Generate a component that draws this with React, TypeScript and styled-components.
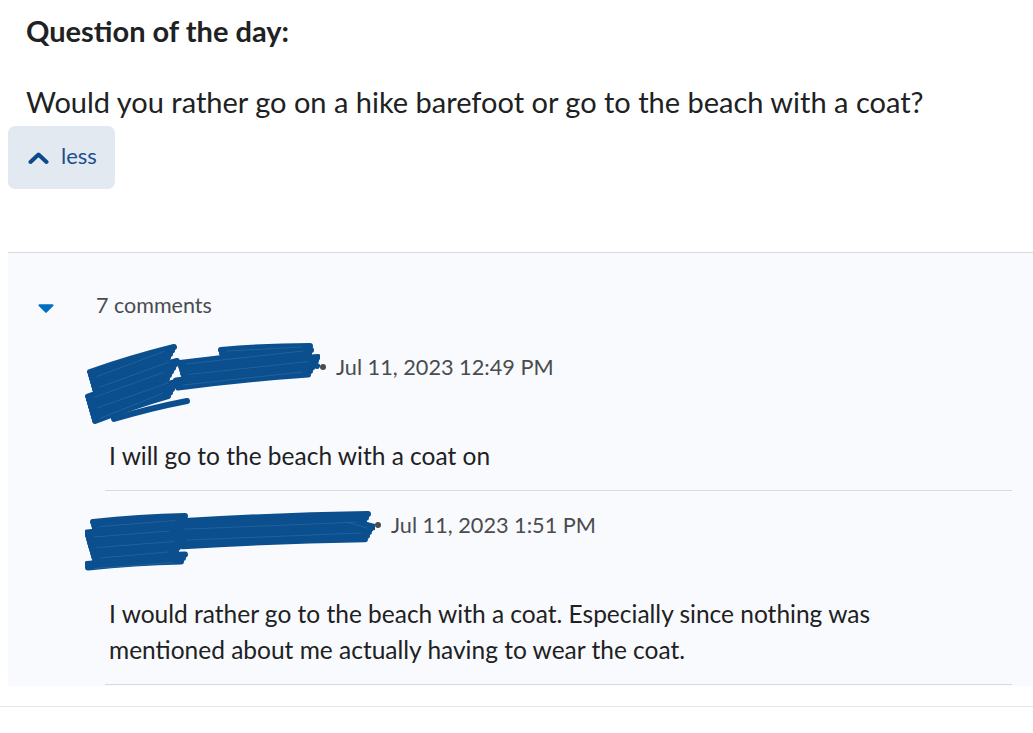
import React from 'react';
import styled, { createGlobalStyle } from 'styled-components';

const GlobalStyle = createGlobalStyle`
  html, body {
    margin: 0;
    padding: 0;
    background: #ffffff;
  }
  body {
    font-family: Lato, "Open Sans", "Liberation Sans", sans-serif;
    color: #202122;
  }
`;

const Page = styled.div`
  width: 1033px;
  padding-left: 8px;
  box-sizing: border-box;
`;

const QuestionArea = styled.section`
  display: flex;
  flex-direction: column;
  align-items: flex-start;
`;

const Title = styled.h2`
  margin: 13px 0 0 18px;
  font-size: 29px;
  line-height: 35px;
  font-weight: 700;
  color: #202122;
`;

const QuestionText = styled.p`
  margin: 36px 0 0 18px;
  font-size: 29px;
  line-height: 35px;
  font-weight: 400;
  color: #202122;
`;

const LessButton = styled.button`
  margin-top: 7px;
  width: 107px;
  height: 63px;
  border: none;
  border-radius: 7px;
  background: #e3e9f1;
  display: flex;
  align-items: center;
  gap: 12px;
  padding: 0 0 0 20px;
  font-family: inherit;
  font-size: 22px;
  color: #1b4f8c;
  cursor: pointer;
`;

const ButtonLabel = styled.span`
  padding-bottom: 5px;
`;

const Panel = styled.section`
  margin-top: 63px;
  border-top: 1px solid #d6dbe3;
  background: #f9fafe;
  padding: 39px 21px 1px 30px;
`;

const ToggleRow = styled.div`
  display: flex;
  align-items: center;
  gap: 42px;
  height: 26px;

  svg {
    margin-top: 6px;
  }
`;

const CountText = styled.span`
  font-size: 21.5px;
  line-height: 26px;
  color: #494c4e;
`;

const CommentList = styled.div`
  margin: 25px 0 0 67px;
`;

const CommentItem = styled.article<{ $padTop: number }>`
  padding-top: ${p => p.$padTop}px;
  padding-bottom: 16px;
  border-bottom: 1px solid #d6dbe3;
`;

const CommentHeader = styled.div`
  display: flex;
  align-items: flex-start;
  margin-left: -20px;
`;

const Meta = styled.div<{ $offset: number }>`
  display: flex;
  align-items: center;
  margin-top: ${p => p.$offset}px;
  font-size: 21.7px;
  line-height: 26px;
  color: #494c4e;
`;

const Dot = styled.span`
  width: 6px;
  height: 6px;
  border-radius: 50%;
  background: #494c4e;
  margin: 0 10px 0 0;
`;

const CommentBody = styled.p<{ $gap: number }>`
  margin: ${p => p.$gap}px 0 0 4px;
  max-width: 800px;
  font-size: 24.5px;
  line-height: 36px;
  color: #202122;
`;

const BottomRule = styled.hr`
  margin: 20px 0 0 -8px;
  border: none;
  border-top: 1px solid #e3e6ea;
  height: 0;
`;

type Stroke = [number, number, number, number];

// hand-drawn looking band of strokes, used to hide names
const band = (
  x0: number, y0: number, x1: number, y1: number,
  count: number, step: number, seed: number
): Stroke[] =>
  Array.from({ length: count }, (_, i) => {
    const j1 = ((i * 37 + seed * 11) % 9) - 4;
    const j2 = ((i * 53 + seed * 7) % 11) - 5;
    return [x0 + j1, y0 + i * step, x1 + j2, y1 + i * step];
  });

const Scribble = ({ strokes, width, height }: { strokes: Stroke[]; width: number; height: number }) => (
  <svg width={width} height={height} viewBox={`0 0 ${width} ${height}`} style={{ flexShrink: 0 }}>
    <g stroke="#0b4f8e" strokeWidth={6} strokeLinecap="round" fill="none">
      {strokes.map(([a, b, c, d], i) => (
        <path key={i} d={`M${a} ${b} Q${(a + c) / 2} ${(b + d) / 2 - 2} ${c} ${d}`} />
      ))}
    </g>
    <g stroke="#3a74ad" strokeWidth={0.8} strokeLinecap="round" fill="none" opacity={0.6}>
      {strokes.filter((_, i) => i % 3 === 1).map(([a, b, c, d], i) => (
        <path key={i} d={`M${a + 6} ${b + 1} L${c - 8} ${d + 1}`} />
      ))}
    </g>
  </svg>
);

const comments = [
  {
    width: 235,
    height: 82,
    strokes: [
      ...band(7, 29, 87, 4, 15, 3.5, 1),
      ...band(30, 76, 98, 58, 1, 4, 6),
      ...band(140, 7, 222, 3, 3, 3.5, 9),
      ...band(95, 20, 228, 7, 8, 3.5, 2),
      [198, 14, 232, 23] as Stroke,
    ],
    padTop: 0,
    metaOffset: 11,
    bodyGap: 13,
    date: 'Jul 11, 2023 12:49 PM',
    text: 'I will go to the beach with a coat on',
  },
  {
    width: 290,
    height: 66,
    strokes: [
      ...band(6, 14, 95, 8, 14, 3.5, 3),
      ...band(96, 13, 282, 6, 8, 3.6, 4),
      [255, 13, 290, 19] as Stroke,
    ],
    padTop: 17,
    metaOffset: 4,
    bodyGap: 22,
    date: 'Jul 11, 2023 1:51 PM',
    text: 'I would rather go to the beach with a coat. Especially since nothing was mentioned about me actually having to wear the coat.',
  },
];

const App = () => {
  return (
    <Page>
      <GlobalStyle />
      <QuestionArea>
        <Title>Question of the day:</Title>
        <QuestionText>Would you rather go on a hike barefoot or go to the beach with a coat?</QuestionText>
        <LessButton>
          <svg width="21" height="14" viewBox="0 0 21 14">
            <polyline points="2.5,11 10.5,3.5 18.5,11" fill="none" stroke="#0d4a8a" strokeWidth="4" strokeLinecap="round" strokeLinejoin="round" />
          </svg>
          <ButtonLabel>less</ButtonLabel>
        </LessButton>
      </QuestionArea>

      <Panel>
        <ToggleRow>
          <svg width="16" height="9" viewBox="0 0 16 9">
            <path d="M1.5 1.2 L14.5 1.2 L8 7.8 Z" fill="#006fbf" stroke="#006fbf" strokeWidth="2" strokeLinejoin="round" />
          </svg>
          <CountText>7 comments</CountText>
        </ToggleRow>

        <CommentList>
          {comments.map((c, i) => (
            <CommentItem key={i} $padTop={c.padTop}>
              <CommentHeader>
                <Scribble strokes={c.strokes} width={c.width} height={c.height} />
                <Meta $offset={c.metaOffset}>
                  <Dot />
                  {c.date}
                </Meta>
              </CommentHeader>
              <CommentBody $gap={c.bodyGap}>{c.text}</CommentBody>
            </CommentItem>
          ))}
        </CommentList>
      </Panel>
      <BottomRule />
    </Page>
  );
};

export default App;
